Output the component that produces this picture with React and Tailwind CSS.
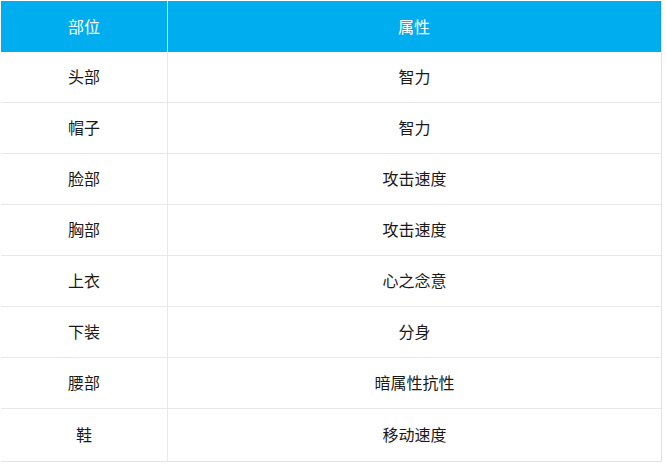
const rows = [
  ['头部', '智力'],
  ['帽子', '智力'],
  ['脸部', '攻击速度'],
  ['胸部', '攻击速度'],
  ['上衣', '心之念意'],
  ['下装', '分身'],
  ['腰部', '暗属性抗性'],
  ['鞋', '移动速度'],
];

export default function App() {
  return (
    <div className="w-[666px] h-[466px] bg-white pl-px pt-px font-['Liberation_Sans','Noto_Sans_CJK_SC',sans-serif]">
      <div className="w-[661px] border-r border-b border-[#dde3ea]">
        {/* header */}
        <div className="flex h-[51px] bg-[#00aeef] text-white text-[16px]">
          <div className="w-[167px] pt-[3px] flex items-center justify-center border-r border-[#bfe9fb]">部位</div>
          <div className="flex-1 pt-[3px] flex items-center justify-center border-r border-[#0a9fd8]">属性</div>
        </div>
        {rows.map(([part, attr], i) => (
          <div
            key={i}
            className="flex h-[51px] text-[16px] text-[#1a1a1a] border-b border-[#e6e9ec] last:border-b-0 last:h-[52px]"
          >
            <div className="w-[167px] pt-[2px] flex items-center justify-center border-r border-[#e6e9ec]">{part}</div>
            <div className="flex-1 pt-[2px] flex items-center justify-center">{attr}</div>
          </div>
        ))}
      </div>
    </div>
  );
}
